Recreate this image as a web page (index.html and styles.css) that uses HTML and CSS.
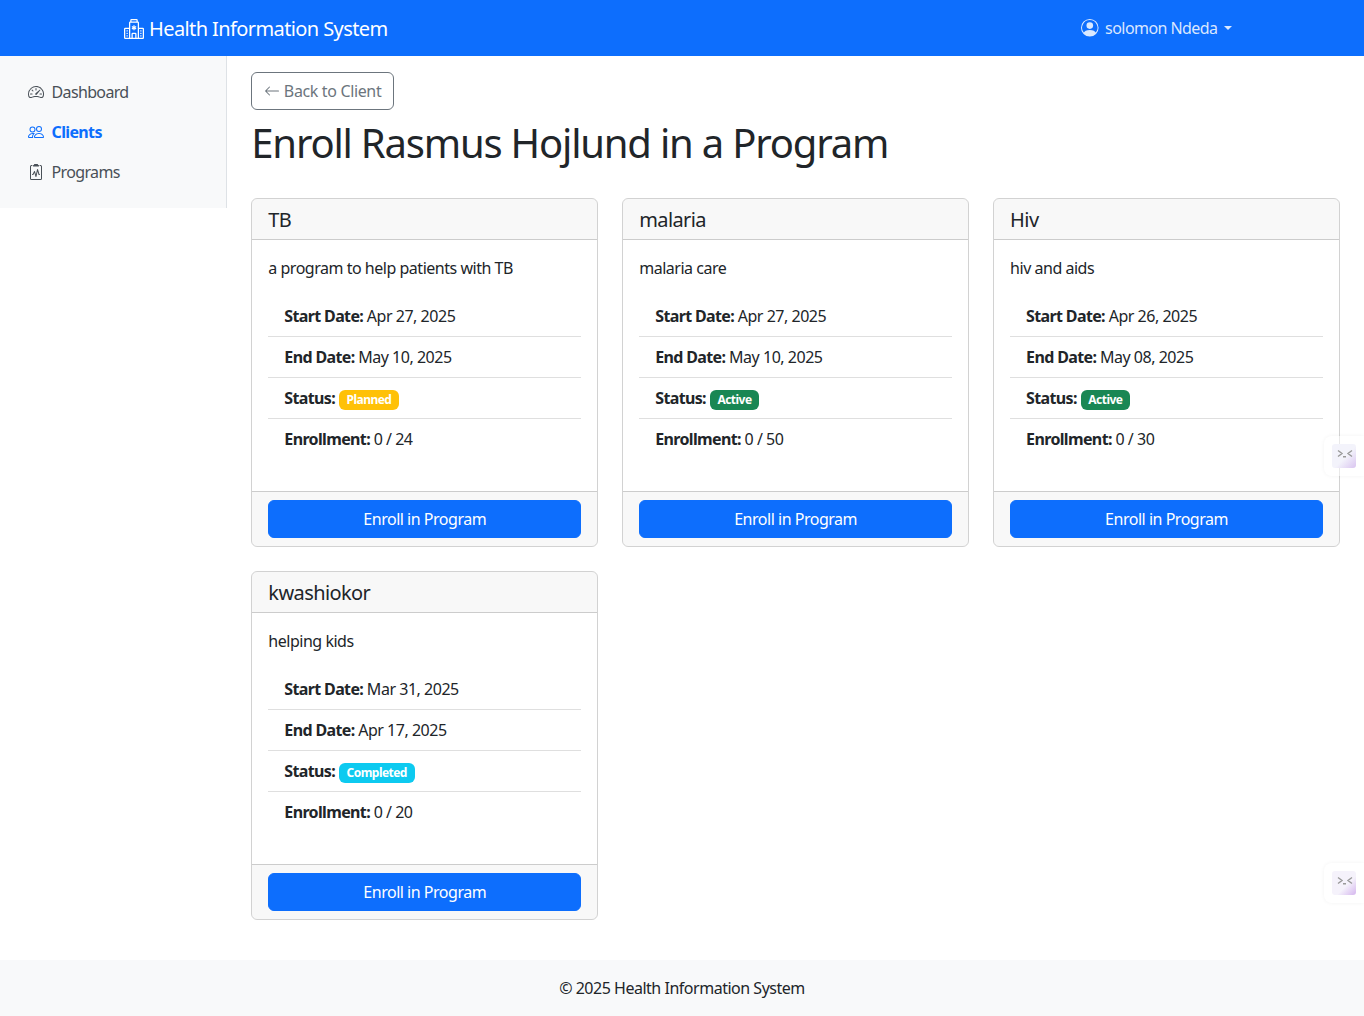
FILE: index.html
```html
<!DOCTYPE html>
<html lang="en">
<head>
    <meta charset="UTF-8">
    <meta name="viewport" content="width=device-width, initial-scale=1.0">
    <title>Enroll in Program - Health Information System</title>
    <link rel="stylesheet" href="styles.css">
</head>
<body>

    <nav class="navbar">
        <div class="navbar-inner">
            <a class="brand" href="#">
                <svg class="icon-brand" viewBox="0 0 16 16" fill="currentColor"><path d="M8.5 5.034v1.1l.953-.55.5.867L9 7l.953.55-.5.866-.953-.55v1.1h-1v-1.1l-.953.55-.5-.866L7 7l-.953-.55.5-.866.953.55v-1.1zM13.25 9a.25.25 0 0 0-.25.25v.5c0 .138.112.25.25.25h.5a.25.25 0 0 0 .25-.25v-.5a.25.25 0 0 0-.25-.25zM13 11.25a.25.25 0 0 1 .25-.25h.5a.25.25 0 0 1 .25.25v.5a.25.25 0 0 1-.25.25h-.5a.25.25 0 0 1-.25-.25zm.25 1.75a.25.25 0 0 0-.25.25v.5c0 .138.112.25.25.25h.5a.25.25 0 0 0 .25-.25v-.5a.25.25 0 0 0-.25-.25zm-11-4a.25.25 0 0 0-.25.25v.5c0 .138.112.25.25.25h.5A.25.25 0 0 0 3 9.75v-.5A.25.25 0 0 0 2.75 9zm0 2a.25.25 0 0 0-.25.25v.5c0 .138.112.25.25.25h.5a.25.25 0 0 0 .25-.25v-.5a.25.25 0 0 0-.25-.25zM2 13.25a.25.25 0 0 1 .25-.25h.5a.25.25 0 0 1 .25.25v.5a.25.25 0 0 1-.25.25h-.5a.25.25 0 0 1-.25-.25z"/><path d="M5 1a1 1 0 0 1 1-1h4a1 1 0 0 1 1 1v1a1 1 0 0 1 1 1v4h3a1 1 0 0 1 1 1v7a1 1 0 0 1-1 1H1a1 1 0 0 1-1-1V8a1 1 0 0 1 1-1h3V3a1 1 0 0 1 1-1zm2 14h2v-3H7zm3 0h1V3H5v12h1v-3a1 1 0 0 1 1-1h2a1 1 0 0 1 1 1zm0-14H6v1h4zm2 7v7h3V8zm-8 7V8H1v7z"/></svg>
                Health Information System
            </a>
            <a class="user-toggle" href="#">
                <svg class="icon-user" viewBox="0 0 16 16" fill="currentColor"><path d="M11 6a3 3 0 1 1-6 0 3 3 0 0 1 6 0"/><path fill-rule="evenodd" d="M0 8a8 8 0 1 1 16 0A8 8 0 0 1 0 8m8-7a7 7 0 0 0-5.468 11.37C3.242 11.226 4.805 10 8 10s4.757 1.225 5.468 2.37A7 7 0 0 0 8 1"/></svg>
                solomon Ndeda
                <span class="caret"></span>
            </a>
        </div>
    </nav>

    <div class="layout">
        <aside class="sidebar-col">
            <ul class="sidebar">
                <li><a class="side-link" href="#">
                    <svg class="icon" viewBox="0 0 16 16" fill="currentColor"><path d="M8 4a.5.5 0 0 1 .5.5V6a.5.5 0 0 1-1 0V4.5A.5.5 0 0 1 8 4M3.732 5.732a.5.5 0 0 1 .707 0l.915.914a.5.5 0 1 1-.708.708l-.914-.915a.5.5 0 0 1 0-.707M2 10a.5.5 0 0 1 .5-.5h1.586a.5.5 0 0 1 0 1H2.5A.5.5 0 0 1 2 10m9.5 0a.5.5 0 0 1 .5-.5h1.5a.5.5 0 0 1 0 1H12a.5.5 0 0 1-.5-.5m.754-4.246a.39.39 0 0 0-.527-.02L7.547 9.31a.91.91 0 1 0 1.302 1.258l3.434-4.297a.39.39 0 0 0-.029-.518z"/><path fill-rule="evenodd" d="M0 10a8 8 0 1 1 15.547 2.661c-.442 1.253-1.845 1.602-2.932 1.25C11.309 13.488 9.475 13 8 13c-1.474 0-3.31.488-4.615.911-1.087.352-2.49.003-2.932-1.25A8 8 0 0 1 0 10m8-7a7 7 0 0 0-6.603 9.329c.203.575.923.876 1.68.63C4.397 12.533 6.358 12 8 12s3.604.532 4.923.96c.757.245 1.477-.056 1.68-.631A7 7 0 0 0 8 3"/></svg>
                    Dashboard
                </a></li>
                <li><a class="side-link active" href="#">
                    <svg class="icon" viewBox="0 0 16 16" fill="currentColor"><path d="M15 14s1 0 1-1-1-4-5-4-5 3-5 4 1 1 1 1zm-7.978-1L7 12.996c.001-.264.167-1.03.76-1.72C8.312 10.629 9.282 10 11 10c1.717 0 2.687.63 3.24 1.276.593.69.758 1.457.76 1.72l-.008.002-.014.002zM11 7a2 2 0 1 0 0-4 2 2 0 0 0 0 4m3-2a3 3 0 1 1-6 0 3 3 0 0 1 6 0M6.936 9.28a6 6 0 0 0-1.23-.247A7 7 0 0 0 5 9c-4 0-5 3-5 4q0 1 1 1h4.216A2.24 2.24 0 0 1 5 13c0-1.01.377-2.042 1.09-2.904.243-.294.526-.569.846-.816M4.92 10A5.5 5.5 0 0 0 4 13H1c0-.26.164-1.03.76-1.724.545-.636 1.492-1.256 3.16-1.275ZM1.5 5.5a3 3 0 1 1 6 0 3 3 0 0 1-6 0m3-2a2 2 0 1 0 0 4 2 2 0 0 0 0-4"/></svg>
                    Clients
                </a></li>
                <li><a class="side-link" href="#">
                    <svg class="icon" viewBox="0 0 16 16" fill="currentColor"><path d="M9.5 0a.5.5 0 0 1 .5.5.5.5 0 0 0 .5.5.5.5 0 0 1 .5.5V2a.5.5 0 0 1-.5.5h-5A.5.5 0 0 1 5 2v-.5a.5.5 0 0 1 .5-.5.5.5 0 0 0 .5-.5.5.5 0 0 1 .5-.5z"/><path d="M3 2.5a.5.5 0 0 1 .5-.5H4a.5.5 0 0 0 0-1h-.5A1.5 1.5 0 0 0 2 2.5v12A1.5 1.5 0 0 0 3.5 16h9a1.5 1.5 0 0 0 1.5-1.5v-12A1.5 1.5 0 0 0 12.5 1H12a.5.5 0 0 0 0 1h.5a.5.5 0 0 1 .5.5v12a.5.5 0 0 1-.5.5h-9a.5.5 0 0 1-.5-.5z"/><path d="M9.979 5.356a.5.5 0 0 0-.968.04L7.92 10.49l-.94-3.135a.5.5 0 0 0-.926-.08L4.69 10H4.5a.5.5 0 0 0 0 1H5a.5.5 0 0 0 .447-.276l.936-1.873 1.138 3.793a.5.5 0 0 0 .968-.04L9.58 7.51l.94 3.135A.5.5 0 0 0 11 11h.5a.5.5 0 0 0 0-1h-.128z"/></svg>
                    Programs
                </a></li>
            </ul>
        </aside>

        <main class="content">
            <a class="btn-back" href="#">
                <svg class="icon" viewBox="0 0 16 16" fill="currentColor"><path fill-rule="evenodd" d="M15 8a.5.5 0 0 0-.5-.5H2.707l3.147-3.146a.5.5 0 1 0-.708-.708l-4 4a.5.5 0 0 0 0 .708l4 4a.5.5 0 0 0 .708-.708L2.707 8.5H14.5A.5.5 0 0 0 15 8"/></svg>
                Back to Client
            </a>
            <h1>Enroll Rasmus Hojlund in a Program</h1>

            <div class="program-grid">
                <section class="card">
                    <h5 class="card-header">TB</h5>
                    <div class="card-body">
                        <p>a program to help patients with TB</p>
                        <ul class="details">
                            <li><strong>Start Date:</strong> Apr 27, 2025</li>
                            <li><strong>End Date:</strong> May 10, 2025</li>
                            <li><strong>Status:</strong> <span class="badge badge-planned">Planned</span></li>
                            <li><strong>Enrollment:</strong> 0 / 24</li>
                        </ul>
                    </div>
                    <div class="card-footer"><button class="btn-enroll" type="button">Enroll in Program</button></div>
                </section>

                <section class="card">
                    <h5 class="card-header">malaria</h5>
                    <div class="card-body">
                        <p>malaria care</p>
                        <ul class="details">
                            <li><strong>Start Date:</strong> Apr 27, 2025</li>
                            <li><strong>End Date:</strong> May 10, 2025</li>
                            <li><strong>Status:</strong> <span class="badge badge-active">Active</span></li>
                            <li><strong>Enrollment:</strong> 0 / 50</li>
                        </ul>
                    </div>
                    <div class="card-footer"><button class="btn-enroll" type="button">Enroll in Program</button></div>
                </section>

                <section class="card">
                    <h5 class="card-header">Hiv</h5>
                    <div class="card-body">
                        <p>hiv and aids</p>
                        <ul class="details">
                            <li><strong>Start Date:</strong> Apr 26, 2025</li>
                            <li><strong>End Date:</strong> May 08, 2025</li>
                            <li><strong>Status:</strong> <span class="badge badge-active">Active</span></li>
                            <li><strong>Enrollment:</strong> 0 / 30</li>
                        </ul>
                    </div>
                    <div class="card-footer"><button class="btn-enroll" type="button">Enroll in Program</button></div>
                </section>

                <section class="card">
                    <h5 class="card-header">kwashiokor</h5>
                    <div class="card-body">
                        <p>helping kids</p>
                        <ul class="details">
                            <li><strong>Start Date:</strong> Mar 31, 2025</li>
                            <li><strong>End Date:</strong> Apr 17, 2025</li>
                            <li><strong>Status:</strong> <span class="badge badge-completed">Completed</span></li>
                            <li><strong>Enrollment:</strong> 0 / 20</li>
                        </ul>
                    </div>
                    <div class="card-footer"><button class="btn-enroll" type="button">Enroll in Program</button></div>
                </section>
            </div>
        </main>
    </div>

    <footer class="footer">© 2025 Health Information System</footer>

    <div class="float-tab float-tab-1">
        <svg class="float-face" viewBox="0 0 24 24" fill="none" stroke="#9a9a9a" stroke-width="1.4"><path d="M6 6.500l4 3-4 3M20 6.500l-4 3 4 3M11 12.700h3"/></svg>
    </div>
    <div class="float-tab float-tab-2">
        <svg class="float-face face-strong" viewBox="0 0 24 24" fill="none" stroke="#9a9a9a" stroke-width="1.4"><path d="M6 6.500l4 3-4 3M20 6.500l-4 3 4 3M11 12.700h3"/></svg>
    </div>

</body>
</html>
```

FILE: styles.css
```css
* {
    box-sizing: border-box;
    letter-spacing: -0.03em;
}
body {
    margin: 0;
    font-family: "Noto Sans", sans-serif;
    font-size: 16px;
    line-height: 1.5;
    color: #212529;
    background: #fff;
    position: relative;
}
a {
    text-decoration: none;
}
.icon {
    width: 16px;
    height: 16px;
    flex: none;
}

/* navbar */
.navbar {
    height: 56px;
    background: #0d6efd;
}
.navbar-inner {
    width: 1140px;
    height: 100%;
    margin: 0 auto;
    padding: 0 20px 0 12px;
    display: flex;
    align-items: center;
    justify-content: space-between;
}
.brand {
    display: flex;
    align-items: center;
    gap: 5px;
    padding-top: 2px;
    font-size: 20px;
    color: #fff;
}
.icon-brand {
    width: 20px;
    height: 20px;
}
.user-toggle {
    display: flex;
    align-items: center;
    gap: 6.5px;
    color: rgba(255, 255, 255, 0.85);
    letter-spacing: -0.035em;
}
.icon-user {
    width: 17.6px;
    height: 17.6px;
    flex: none;
}
.caret {
    border-top: 4.8px solid;
    border-left: 4.8px solid transparent;
    border-right: 4.8px solid transparent;
}

/* sidebar + main */
.layout {
    display: grid;
    grid-template-columns: 2fr 10fr;
    align-items: start;
}
.sidebar {
    list-style: none;
    margin: 0;
    padding: 16px 12px;
    background: #f8f9fa;
    border-right: 1px solid #dee2e6;
}
.side-link {
    display: flex;
    align-items: center;
    gap: 7.5px;
    padding: 8px 16px;
    color: #495057;
    letter-spacing: -0.04em;
}
.side-link.active {
    color: #0d6efd;
    font-weight: 700;
}
.content {
    padding: 16px 24px;
}
.btn-back {
    display: inline-flex;
    align-items: center;
    gap: 3.500px;
    height: 38px;
    padding: 0 12px;
    margin-bottom: 8px;
    color: #6c757d;
    border: 1px solid #6c757d;
    border-radius: 6px;
    vertical-align: top;
    letter-spacing: -0.022em;
}
h1 {
    margin: 0 0 31px;
    padding-top: 1px;
    font-size: 40px;
    font-weight: 400;
    line-height: 1.2;
}

/* cards */
.program-grid {
    display: grid;
    grid-template-columns: repeat(3, 1fr);
    gap: 24px;
}
.card {
    border: 1px solid rgba(0, 0, 0, 0.175);
    border-radius: 6px;
    overflow: hidden;
}
.card-header {
    margin: 0;
    padding: 9px 16px 7px;
    font-size: 20px;
    font-weight: 400;
    line-height: 1.2;
    background: rgba(33, 37, 41, 0.03);
    border-bottom: 1px solid rgba(0, 0, 0, 0.175);
}
.card-body {
    padding: 16px;
}
.card-body p {
    margin: 0 0 16px;
}
.details {
    list-style: none;
    margin: 0 0 16px;
    padding: 0;
}
.details li {
    padding: 8px 16px;
    border-bottom: 1px solid rgba(0, 0, 0, 0.125);
}
.details li:last-child {
    border-bottom: 0;
}
.details strong {
    font-weight: 700;
    letter-spacing: -0.04em;
}
.badge {
    display: inline-block;
    padding: 0.35em 0.65em;
    font-size: 12px;
    font-weight: 700;
    line-height: 1;
    color: #fff;
    text-align: center;
    white-space: nowrap;
    vertical-align: baseline;
    border-radius: 6px;
    letter-spacing: -0.045em;
}
.badge-planned {
    background: #ffc107;
}
.badge-active {
    background: #198754;
}
.badge-completed {
    background: #0dcaf0;
}
.card-footer {
    padding: 8px 16px;
    background: rgba(33, 37, 41, 0.03);
    border-top: 1px solid rgba(0, 0, 0, 0.175);
}
.btn-enroll {
    display: block;
    width: 100%;
    height: 38px;
    padding: 0 12px;
    font-family: inherit;
    font-size: 16px;
    color: #fff;
    background: #0d6efd;
    border: 1px solid #0d6efd;
    border-radius: 6px;
}

/* footer */
.footer {
    margin-top: 24px;
    height: 56px;
    display: flex;
    align-items: center;
    justify-content: center;
    background: #f8f9fa;
}

/* floating extension tabs on the right edge */
.float-tab {
    position: absolute;
    right: 0;
    width: 40px;
    height: 40px;
    padding: 8px;
    background: rgba(255, 255, 255, 0.5);
    border-radius: 8px 0 0 8px;
    box-shadow: 0 0 4px rgba(0, 0, 0, 0.05);
}
.float-tab-1 {
    top: 436px;
}
.float-tab-2 {
    top: 863px;
}
.float-face {
    display: block;
    width: 24px;
    height: 24px;
    border-radius: 3px;
    background: linear-gradient(135deg, #f3f3fb 55%, #d9c4f0);
}
.face-strong {
    background: linear-gradient(135deg, #f5f2fb 60%, #d4b5ee);
}
```
